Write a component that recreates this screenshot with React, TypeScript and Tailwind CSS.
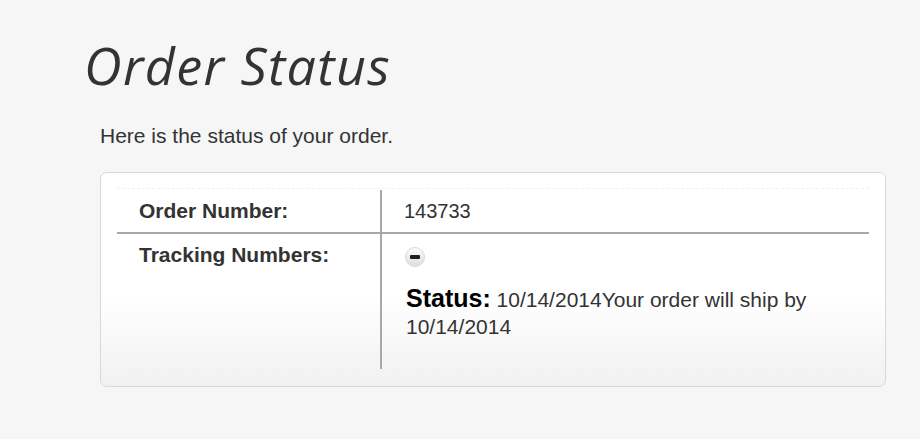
export default function App() {
    return (
        <div className="min-h-[439px] w-full bg-[#f6f6f6] font-['Liberation_Sans',Arial,sans-serif] text-[#333]">
            <div className="pl-[84px] pt-[33px]">
                <h1 className="font-['Open_Sans',sans-serif] text-[52px] italic leading-[64px] tracking-[1.4px] text-[#333]">
                    Order Status
                </h1>
            </div>
            <p className="pl-[100px] pt-[27px] text-[21px] leading-[24px]">Here is the status of your order.</p>

            <div className="ml-[100px] mt-[24px] w-[786px] rounded-[7px] border border-[#d9d9d9] bg-[linear-gradient(to_bottom,#ffffff_0%,#ffffff_57%,#f1f1f1_100%)] px-4 pb-[15px] pt-[15px]">
                <div className="border-y border-dashed border-[#f0f0f0] py-[1px]">
                    <table className="w-full border-collapse text-[21px]">
                        <tbody>
                            <tr className="border-b-2 border-[#a8a8a8]">
                                <td className="w-[264px] border-r-2 border-[#a8a8a8] py-[9px] pl-[22px] leading-[24px] font-bold">Order Number:</td>
                                <td className="py-[9px] pl-[22px] leading-[24px] text-[20px]">143733</td>
                            </tr>
                            <tr>
                                <td className="border-r-2 border-[#a8a8a8] pb-[29px] pl-[22px] pt-[9px] align-top leading-[24px] font-bold">Tracking Numbers:</td>
                                <td className="pb-[29px] pl-[23px] pr-4 pt-[13px] align-top">
                                    <span className="flex h-[20px] w-[20px] items-center justify-center rounded-full border border-[#d8d8d8] bg-gradient-to-b from-[#fbfbfb] to-[#dedede]">
                                        <span className="h-[4px] w-[10px] rounded-[1px] bg-[#1e1e1e]" />
                                    </span>
                                    <p className="mt-[18px] pl-[1px] leading-[27px]">
                                        <span className="text-[25px] leading-[27px] font-bold text-black">Status:</span> 10/14/2014Your order will ship by 10/14/2014
                                    </p>
                                </td>
                            </tr>
                        </tbody>
                    </table>
                </div>
            </div>
        </div>
    );
}
